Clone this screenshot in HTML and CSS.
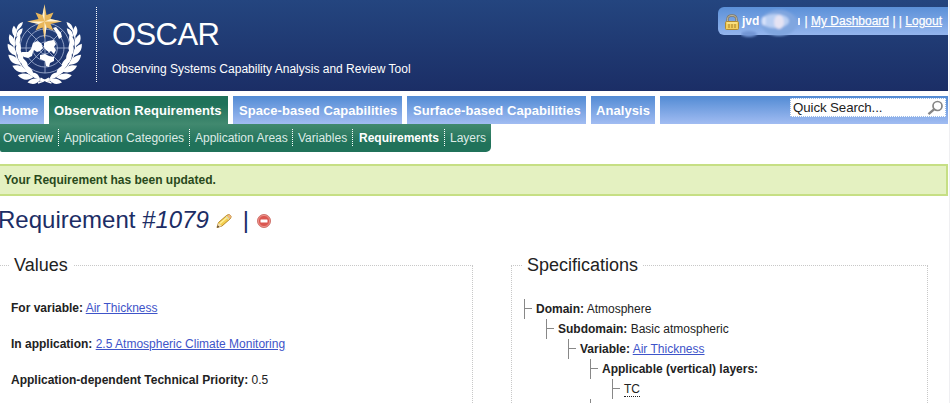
FILE: index.html
```html
<!DOCTYPE html>
<html lang="en">
<head>
<meta charset="utf-8">
<title>OSCAR - Requirement #1079</title>
<link rel="stylesheet" href="styles.css">
</head>
<body>
<div class="page">
  <header class="header">
    <svg class="logo" width="90" height="91" viewBox="0 0 90 91">
      <defs>
        <g id="leaf"><path d="M0 2C-7 0-10-5-9-12C-4-10 0-6 0 2Z"/><path d="M1 1C-2-5 0-11 4-14C7-5 5-3 1 1Z"/></g>
        <g id="laurel" fill="#fff">
          <path d="M50 81C34 80 17 69 14 48Q13 34 20 25M38 83Q43 82 49 78" fill="none" stroke="#fff" stroke-width="1.300"/>
          <use href="#leaf" transform="translate(39 79) rotate(-70) scale(.8)"/>
          <use href="#leaf" transform="translate(32 76) rotate(-50) scale(.95)"/>
          <use href="#leaf" transform="translate(26 70) rotate(-36) scale(.95)"/>
          <use href="#leaf" transform="translate(20 63) rotate(-18) scale(.95)"/>
          <use href="#leaf" transform="translate(16.500 54) rotate(-4) scale(.9)"/>
          <use href="#leaf" transform="translate(15 45) rotate(10) scale(.8)"/>
          <use href="#leaf" transform="translate(16 36) rotate(25) scale(.7)"/>
          <path d="M16 31Q17 23 23 22Q22 28 16 31Z"/>
        </g>
      </defs>
      <g fill="none" stroke="#a9b8d7" stroke-width=".8">
        <circle cx="45" cy="48" r="25"/><circle cx="45" cy="48" r="19"/><circle cx="45" cy="48" r="12.500"/><circle cx="45" cy="48" r="6"/>
        <path d="M45 23V73M20 48H70M27.500 30.500L62.500 65.500M62.500 30.500L27.500 65.500"/>
      </g>
      <g fill="#fff">
        <path d="M33 43L37 41L41 43L43 48L40 51L37 52L34 50L33 52L32 56L28 58L24 57L20 54L22 52L28 52L31 49L32 46Z"/>
        <path d="M44 43L48 41L54 40L56 44L54 47L56 50L54 54L51 51L49 52L46 50L44 47Z"/>
        <path d="M40 55L45 54L49 56L54 57L54 61L50 63L49 67L46 66L45 61L40 59Z"/>
        <path d="M53 28L56 27L61 33L62 37L59 39L57 34Z"/>
      </g>
      <use href="#laurel"/><use href="#laurel" transform="translate(89.500 0) scale(-1 1)"/>
      <path fill="#e9b75b" d="M44.500 4L46.500 15L53.500 12.500L50.500 19L62 21.500L50.500 24L53.500 30.500L46.500 27.500L44.500 39L42.500 27.500L35.500 30.500L38.500 24L27 21.500L38.500 19L35.500 12.500L42.500 15Z"/>
      <path fill="#fff4d8" d="M44.500 5V21.500L42.500 15ZM62 21.500H44.500L50.500 19ZM44.500 38V21.500L46.500 27.500ZM28 21.500H44.500L38.500 24Z"/>
    </svg>
    <div class="brand">
      <div class="name">OSCAR</div>
      <div class="tagline">Observing Systems Capability Analysis and Review Tool</div>
    </div>
    <div class="userbar">
      <svg class="lock" width="16" height="17" viewBox="0 0 16 17">
        <path d="M3.500 8V5.500Q3.500 1.500 8 1.500Q12.500 1.500 12.500 5.500V8" fill="none" stroke="#817a67" stroke-width="2.400"/>
        <path d="M3.500 8V5.500Q3.500 1.500 8 1.500Q12.500 1.500 12.500 5.500V8" fill="none" stroke="#c9c4ad" stroke-width=".8"/>
        <rect x="1.500" y="7.500" width="13" height="8" rx="1" fill="#f2cf60" stroke="#b18a32"/>
        <path d="M3 9H13" stroke="#fff0a4"/><path d="M4 11H6M7 11H9M10 11H12M4 13H6M7 13H9M10 13H12" stroke="#a77e27"/>
      </svg>
      <span class="user">jvd</span>
      <svg class="haze" width="62" height="32" viewBox="0 0 62 32">
        <defs><filter id="soft" x="-20%" y="-20%" width="140%" height="140%"><feGaussianBlur stdDeviation="1.300"/></filter></defs>
        <g filter="url(#soft)">
          <ellipse cx="38" cy="16" rx="18" ry="13" fill="#80a6df"/><ellipse cx="8" cy="27" rx="8" ry="3" fill="#7295d4"/>
          <ellipse cx="34" cy="14" rx="14" ry="7" fill="#b9cff3"/><ellipse cx="38" cy="15" rx="5" ry="7" fill="#e5e3f3"/>
          <path d="M23 10V18" stroke="#dce5fb" stroke-width="3"/>
        </g>
        <path d="M58 11V18" stroke="#eef3fd" stroke-width="2"/>
      </svg>
      <span class="links">| <a href="#">My Dashboard</a> | | <a href="#">Logout</a></span>
    </div>
  </header>
  <nav class="nav">
    <a class="tab home">Home</a>
    <a class="tab obs active">Observation Requirements</a>
    <a class="tab space">Space-based Capabilities</a>
    <a class="tab surface">Surface-based Capabilities</a>
    <a class="tab analysis">Analysis</a>
    <div class="searchbar">
      <div class="search"><span>Quick Search...</span>
        <svg width="17" height="16" viewBox="0 0 17 16" fill="none" stroke="#868686"><circle cx="10.500" cy="6" r="4.500" stroke-width="1.700"/><path d="M7.300 9.200L1.500 14.200" stroke-width="2.400"/></svg>
      </div>
    </div>
  </nav>
  <nav class="subnav">
    <a class="overview">Overview</a><a class="categories">Application Categories</a><a class="areas">Application Areas</a><a class="variables">Variables</a><a class="requirements current">Requirements</a><a class="layers">Layers</a>
  </nav>
  <div class="message">Your Requirement has been updated.</div>
  <div class="title">
    <h1>Requirement <em>#1079</em></h1>
    <svg class="pencil" width="16" height="16" viewBox="0 0 16 16">
      <path d="M1 14.500L2.500 9.500L10.500 2.500Q12.500 1 14 2Q16 3.500 14.500 5.500L6 13Z" fill="#f3ce4e" stroke="#b88828"/>
      <path d="M4 10.500L11.500 4" stroke="#fff19b" stroke-width="1.500"/><path d="M11.500 2.300Q13.500 1 14.500 2.500Q15.500 4 14 5.500Z" fill="#edb08f"/><path d="M10 3.500L13 6.500" stroke="#ddd6bd" stroke-width="1.300"/><path d="M2.500 10L1 14.500L6 13Z" fill="#f4dfb3"/><path d="M.8 14.800L1.700 12.300L3.500 14Z" fill="#594329"/>
    </svg>
    <span class="bar">|</span>
    <svg class="delete" width="16" height="16" viewBox="0 0 16 16"><circle cx="8" cy="8" r="6.500" fill="#db5750" stroke="#cf7770"/><circle cx="8" cy="8" r="5.600" fill="none" stroke="#efa29b" stroke-width=".8"/><rect x="4.500" y="6.500" width="7" height="3" rx=".5" fill="#fff"/></svg>
  </div>
  <main class="panels">
    <fieldset class="values">
      <legend>Values</legend>
      <p><b>For variable:</b> <a href="#">Air Thickness</a></p>
      <p><b>In application:</b> <a href="#">2.5 Atmospheric Climate Monitoring</a></p>
      <p><b>Application-dependent Technical Priority:</b> 0.5</p>
    </fieldset>
    <fieldset class="specs">
      <legend>Specifications</legend>
      <ul class="tree">
        <li><div class="row"><b>Domain:</b> Atmosphere</div>
          <ul><li><div class="row"><b>Subdomain:</b> Basic atmospheric</div>
            <ul><li><div class="row"><b>Variable:</b> <a href="#">Air Thickness</a></div>
              <ul><li><div class="row"><b>Applicable (vertical) layers:</b></div>
                <ul><li><div class="row"><span class="abbr">TC</span></div></li></ul>
              </li><li><div class="row"></div></li></ul>
            </li></ul>
          </li></ul>
        </li>
      </ul>
    </fieldset>
  </main>
</div>
</body>
</html>
```
FILE: styles.css
```css
* { box-sizing: border-box; }
body {
  margin: 0;
  height: 403px;
  overflow: hidden;
  background: #fff;
  color: #222;
  font: 12px/20px "Liberation Sans", Arial, sans-serif;
}
.page { width: 950px; height: 403px; overflow: hidden; border-right: 1px solid #efeff2; }
.header {
  display: flex;
  align-items: flex-start;
  width: 948px;
  height: 91px;
  background: linear-gradient(#24457f, #1b2e66);
  color: #fff;
}
.logo { flex: none; }
.brand {
  flex: 1;
  height: 76px;
  margin: 7px 0 0 6px;
  padding-left: 16px;
  background: repeating-linear-gradient(#fff 0 1px, transparent 1px 2px) left / 1px 100% no-repeat;
}
.name { height: 42px; padding-top: 8px; font-size: 31px; line-height: 40px; letter-spacing: -.6px; }
.tagline { padding-top: 10px; }
.userbar {
  display: flex;
  width: 230px;
  height: 28px;
  margin-top: 7px;
  padding: 4px 0 0 6px;
  border-radius: 6px 0 0 6px;
  background: linear-gradient(#5b90d8, #94b5ed);
  position: relative;
}
.lock { margin-top: 3px; }
.user { margin-left: 2px; font-weight: bold; line-height: 20px; }
.haze { position: absolute; left: 23px; top: 0; }
.links { margin-left: auto; padding-right: 6px; line-height: 20px; white-space: nowrap; -webkit-text-stroke: .25px #fff; }
.links a { color: #fff; }

.nav { display: flex; gap: 5px; width: 948px; height: 28px; margin-top: 5px; }
.tab, .searchbar { background: linear-gradient(#528bd4, #a1bcf2); }
.tab { flex: none; padding-left: 5px; color: #fff; font-size: 13px; font-weight: bold; line-height: 29px; letter-spacing: .06px; white-space: nowrap; }
.tab.active { background: linear-gradient(#20725a 30%, #41896f); }
.home { width: 44px; padding-left: 2px; }
.obs, .surface { width: 179px; }
.space { width: 169px; }
.analysis { width: 64px; }
.space, .surface { padding-left: 6px; }
.searchbar { display: flex; flex: 1; justify-content: flex-end; padding: 2px 2px 0 0; }
.search {
  display: flex;
  justify-content: space-between;
  width: 156px;
  height: 19px;
  padding: 1px 1px 0 2px;
  border: 1px dotted #9bbbe8;
  background: #fff;
  font-size: 13.300px;
  line-height: 16px;
  letter-spacing: -.1px;
}
.search svg { flex: none; }

.subnav {
  display: flex;
  width: 491px;
  height: 28px;
  padding-top: 5px;
  border-radius: 0 0 5px 2px;
  background: linear-gradient(#41896f, #20725a 70%);
}
.subnav a { flex: none; height: 18px; padding-left: 5px; color: #ddebe6; line-height: 18px; white-space: nowrap; }
.subnav a:not(:last-child) { background: repeating-linear-gradient(#fff 0 1px, transparent 1px 2px) right / 1px 100% no-repeat; }
.subnav .overview { width: 59px; padding-left: 3px; }
.categories { width: 131px; }
.areas { width: 103px; }
.variables { width: 60px; }
.requirements { width: 92px; }
.subnav .current { color: #fff; font-weight: bold; padding-left: 6px; }

.message {
  width: 948px;
  height: 32px;
  margin-top: 12px;
  padding-left: 4px;
  border: solid #c6df84;
  border-width: 2px 2px 2px 0;
  background: #e4f1c1;
  color: #29491b;
  font-weight: bold;
  line-height: 28px;
}
.title { display: flex; height: 48px; padding-top: 8px; color: #1c2d65; }
h1 { margin: 0 0 0 -2px; font-size: 24px; font-weight: normal; line-height: 32px; white-space: nowrap; }
.pencil { margin: 9px 0 0 7px; }
.bar { width: 6px; margin-left: 11px; font-size: 24px; line-height: 32px; }
.delete { margin: 9px 0 0 7px; }

.panels { display: flex; gap: 38px; margin-top: 9px; }
fieldset { min-width: 0; height: 190px; margin: 0; border: 1px dotted #c8c8c8; }
legend { padding: 0 5px; color: #222; font-size: 18px; line-height: 24px; }
.values { width: 473px; padding: 0 0 0 11px; border-left: 0; }
.values legend { margin-left: -2px; }
.specs { width: 417px; padding: 0 0 0 12px; }
.specs legend { margin-left: -2px; }
.values p { margin: 0 0 16px; }
.values legend + p { margin-top: 21px; }
.panels a { color: #3e54c9; }
.tree, .tree ul { margin: 0; padding: 0; list-style: none; }
.tree { padding-top: 22px; }
.tree ul { margin-left: 22px; }
.row {
  height: 20px;
  padding-left: 12px;
  background: linear-gradient(#888, #888) 0 9px / 8px 1px no-repeat, linear-gradient(#888, #888) 0 0 / 1px 100% no-repeat;
  white-space: nowrap;
}
.abbr { border-bottom: 1px dotted #222; }
```
